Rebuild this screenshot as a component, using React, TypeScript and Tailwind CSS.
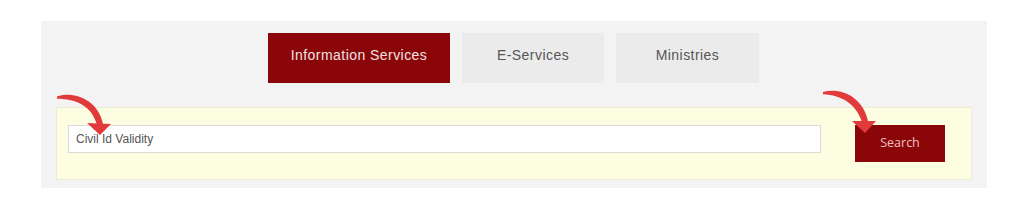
import React from 'react';

const tabs = [
  { label: 'Information Services', width: 'w-[182px]', active: true },
  { label: 'E-Services', width: 'w-[142px]', active: false },
  { label: 'Ministries', width: 'w-[143px]', active: false },
];

const App: React.FC = () => {
  return (
    <div className="relative w-[1024px] h-[203px] bg-white pt-[21px] px-[41px] font-['Liberation_Sans',Arial,sans-serif]">
      <div className="w-[946px] h-[167px] bg-[#f3f3f3] pt-[12px] px-[15px]">
        {/* Tabs */}
        <div className="flex justify-center gap-[12px] pr-[1px]">
          {tabs.map((tab) => (
            <div
              key={tab.label}
              className={`${tab.width} h-[50px] flex items-center justify-center pb-[5px] text-[14px] tracking-[0.45px] ${
                tab.active ? 'bg-[#8a0608] text-[#efe3e3]' : 'bg-[#ebebeb] text-[#555555]'
              }`}
            >
              {tab.label}
            </div>
          ))}
        </div>

        {/* Search box */}
        <div className="mt-[24px] h-[73px] bg-[#fdfde1] border border-[#ebebd6] flex items-start pt-[17px] pl-[11px] pr-[26px]">
          <div className="w-[753px] h-[28px] bg-white border border-[#d9d9d9] flex items-center pl-[7px] text-[12px] text-[#555555]">
            Civil Id Validity
          </div>
          <button className="ml-[34px] w-[90px] h-[37px] bg-[#8a0608] flex items-center justify-center text-[12.5px] text-[#f0c2c2] font-['Open_Sans',sans-serif]">
            Search
          </button>
        </div>
      </div>

      {/* Annotation arrows */}
      <svg className="absolute left-0 top-0 pointer-events-none" width="1024" height="203" viewBox="0 0 1024 203">
        <g fill="#e03a3b">
          <path d="M57,96.5 C73,91 98,99 103,124 L97,125 C92,106 76,99 57,98.8 Z" />
          <path d="M87,123 L111,124 L100,135 Z" />
          <path d="M823,92 C841,87 863,97 868,121 L862,122 C856,104 842,95 823,94.2 Z" />
          <path d="M852,121 L876,121 L865,133 Z" />
        </g>
      </svg>
    </div>
  );
};

export default App;
